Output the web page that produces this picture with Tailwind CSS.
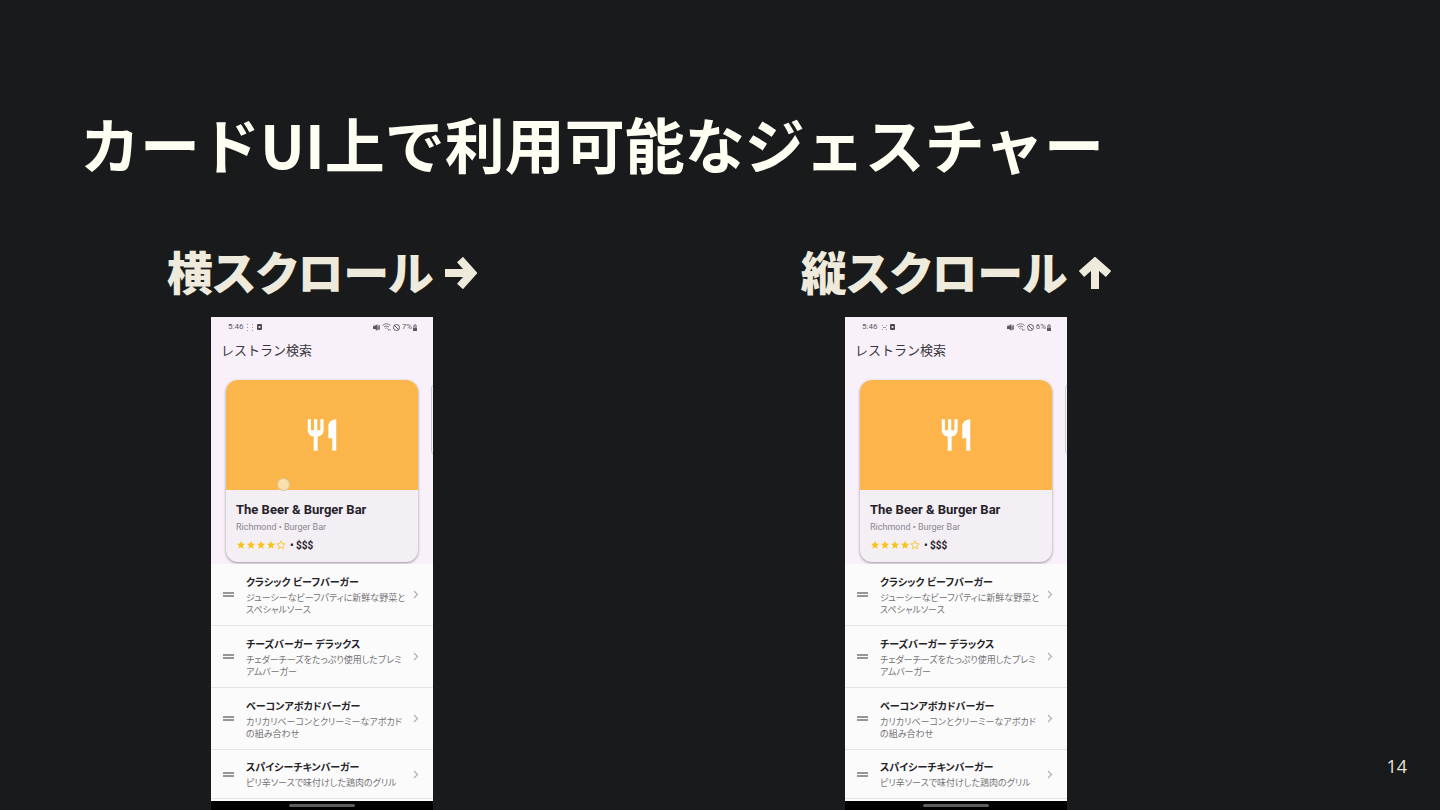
<!DOCTYPE html>
<html lang="ja">
<head>
  <meta charset="UTF-8" />
  <meta name="viewport" content="width=device-width, initial-scale=1.0" />
  <title>カードUI上で利用可能なジェスチャー</title>
  <script src="https://cdn.jsdelivr.net/npm/@tailwindcss/browser@4"></script>
  <style>
    body { font-family: 'Noto Sans CJK JP', sans-serif; }
    .phone { font-family: Roboto, 'Noto Sans CJK JP', sans-serif; }
  </style>
</head>
<body class="bg-[#191a1c]">
  <main class="relative flex flex-col h-screen overflow-hidden">
    <h1 class="pt-[101px] px-20 text-[60px] leading-[84px] font-bold text-[#fdfff3]">カードUI上で利用可能なジェスチャー</h1>

    <div class="grid grid-cols-2 flex-1 pl-[5px] pr-[167px] pt-[55px]">
      <section class="flex flex-col items-center">
        <h2 class="flex items-start gap-3 h-[68px] text-[46px] leading-[60px] font-black text-[#eeebdc]">
          <span class="[font-feature-settings:'palt']">横スクロール</span>
          <svg class="w-8 h-8 mt-[17px]" viewBox="0 0 32 32" fill="none" stroke="currentColor" stroke-width="8"><path d="M0 16h27M15 2.500l12 13.500L15 29.500" /></svg>
        </h2>
        <div class="phone w-[222px] mt-[9px]" data-battery="7%" data-touch="yes"></div>
      </section>
      <section class="flex flex-col items-center">
        <h2 class="flex items-start gap-3 h-[68px] text-[46px] leading-[60px] font-black text-[#eeebdc]">
          <span class="[font-feature-settings:'palt']">縦スクロール</span>
          <svg class="w-8 h-8 mt-[17px]" viewBox="0 0 32 32" fill="none" stroke="currentColor" stroke-width="8"><path d="M16 32V5M2.500 17L16 5l13.500 12" /></svg>
        </h2>
        <div class="phone w-[222px] mt-[9px]" data-battery="6%"></div>
      </section>
    </div>

    <p class="absolute right-[33px] bottom-[30px] text-[18px] leading-[28px] text-[#e6e4d8] font-['Open_Sans']">14</p>
  </main>

  <script>
    const menu = [
      ["クラシック ビーフバーガー", "ジューシーなビーフパティに新鮮な野菜と<br>スペシャルソース"],
      ["チーズバーガー デラックス", "チェダーチーズをたっぷり使用したプレミ<br>アムバーガー"],
      ["ベーコンアボカドバーガー", "カリカリベーコンとクリーミーなアボカド<br>の組み合わせ"],
      ["スパイシーチキンバーガー", "ピリ辛ソースで味付けした鶏肉のグリル"],
    ];

    const starPath = "M12 17.270L18.180 21l-1.640-7.030L22 9.240l-7.190-.610L12 2 9.190 8.630 2 9.240l5.460 4.730L5.820 21z";
    const star = `<svg class="w-[10px] h-[10px]" viewBox="0 0 24 24" fill="#f8c51c"><path d="${starPath}"/></svg>`;
    const emptyStar = `<svg class="w-[10px] h-[10px]" viewBox="0 0 24 24" fill="none" stroke="#f8c51c" stroke-width="2"><path d="${starPath}"/></svg>`;

    const row = ([title, text], last) => `
      <li class="flex items-center pl-3 pr-[13px] border-b border-[#e5e4e6] ${last ? "h-[49px]" : "h-[62px]"}">
        <button aria-label="並べ替え" class="w-[11px] h-[5px] border-y-2 border-[#969597]"></button>
        <div class="flex-1 pl-3 whitespace-nowrap">
          <h4 class="text-[10px] leading-[18px] font-bold text-[#242326] [font-feature-settings:'palt']">${title}</h4>
          <p class="text-[9px] leading-[12px] text-[#747376] [font-feature-settings:'palt']">${text}</p>
        </div>
        <button aria-label="詳細"><svg class="w-[9px] h-[9px]" viewBox="0 0 9 9" fill="none" stroke="#b0afb1" stroke-width="1.200"><path d="M3 1l3.500 3.500L3 8"/></svg></button>
      </li>`;

    document.querySelectorAll(".phone").forEach((phone) => {
      const touch = phone.dataset.touch;
      phone.innerHTML = `
        <div class="relative overflow-hidden bg-[#f9f1fa]">
          <div class="flex items-center h-5 pl-[17px] pr-4 text-[8px] text-[#5c585f]">
            <span>5:46</span>
            <svg class="w-[7px] h-[7px] ml-1 opacity-60" viewBox="0 0 7 7" fill="currentColor">${touch
              ? '<path d="M0 0h1v1H0zM5 0h1v1H5zM0 3h1v1H0zM5 3h1v1H5zM0 6h1v1H0zM5 6h1v1H5z"/>'
              : '<path d="M1 1h1v1H1zM5 1h1v1H5zM2 3h3v1H2zM1 5h1v1H1zM5 5h1v1H5z"/>'}</svg>
            <svg class="w-[5px] h-[6px] ${touch ? "ml-[3px]" : "ml-[2px]"}" viewBox="0 0 5 6"><rect width="5" height="6" rx="1" fill="#4b474e"/><path d="M1.500 2h2v2h-2z" fill="#d8d2da"/></svg>
            <svg class="w-[7px] h-[7px] ml-auto" viewBox="0 0 14 14" fill="currentColor"><path d="M0 4h4l5-4v14L4 10H0z"/><path d="M2 1l11 11M11 3v8M13 2v9" stroke="currentColor" stroke-width="1.500"/></svg>
            <svg class="w-[9px] h-[8px] ml-[2px]" viewBox="0 0 18 16" fill="none" stroke="currentColor" stroke-width="1.600"><path d="M1 5q8-7 16 0M4 8q5-4 10 0M7 11q2-2 4 0M13 12v3M16 12v3"/></svg>
            <svg class="w-[7px] h-[7px] ml-[2px]" viewBox="0 0 14 14" fill="none" stroke="currentColor" stroke-width="2"><circle cx="7" cy="7" r="6"/><path d="M3 3l8 8"/></svg>
            <span class="ml-[2px]">${phone.dataset.battery}</span>
            <svg class="w-1 h-[7px] ml-px" viewBox="0 0 4 7"><path d="M1 0h2v1h1v6H0V1h1z" fill="#a39fa6"/><path d="M0 4h4v3H0z" fill="#5c585f"/></svg>
          </div>
          <h3 class="pl-[10px] text-[13px] leading-7 text-[#3a363d]">レストラン検索</h3>

          <div class="px-[15px] pt-[15px] pb-[2px]">
            <article class="rounded-xl overflow-hidden bg-[#f4eef5] shadow-[0_1px_3px_rgba(0,0,0,0.4)]">
              <div class="flex items-center justify-center h-[110px] ${touch ? "bg-[#fab64a]" : "bg-[#fcb44b]"}">
                <svg class="w-[38px] h-[38px]" viewBox="0 0 24 24" fill="#fff"><path d="M11 9H9V2H7v7H5V2H3v7c0 2.120 1.660 3.840 3.750 3.970V22h2.500v-9.030C11.340 12.840 13 11.120 13 9V2h-2v7zm5-3v8h2.500v8H21V2c-2.760 0-5 2.240-5 4z"/></svg>
              </div>
              <div class="px-[10px] h-[72px] pt-[10px]">
                <h4 class="text-[13px] leading-[19px] font-bold text-[#252228]">The Beer &amp; Burger Bar</h4>
                <p class="text-[9px] leading-[17px] text-[#8a868d]">Richmond • Burger Bar</p>
                <div class="flex items-center h-[18px]">
                  ${star.repeat(4)}${emptyStar}
                  <span class="ml-1 text-[10px] font-bold text-[#252228]">• $$$</span>
                </div>
              </div>
            </article>
          </div>

          <!-- edge of the next card -->
          <div class="absolute top-[67px] -right-4 w-[18px] h-[71px] rounded border border-[#cfc8d1]"></div>
          ${touch ? '<div class="absolute left-[66px] top-[161px] w-[13px] h-[13px] rounded-full bg-[#fae0ac] border border-[#dcc3a0]"></div>' : ""}
        </div>
        <ul class="bg-[#fcfbfc] pb-[2px]">${menu.map((item, i) => row(item, i === menu.length - 1)).join("")}</ul>
        <div class="flex items-start justify-center h-[10px] pt-[3px] bg-black">
          <div class="w-[66px] h-[3px] rounded-full bg-[#5d5d5d]"></div>
        </div>`;
    });
  </script>
</body>
</html>
